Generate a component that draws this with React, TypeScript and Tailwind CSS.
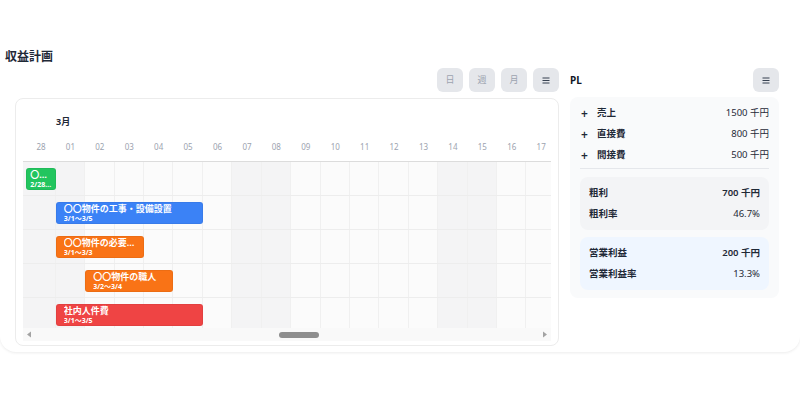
import React from "react";

const days = ["28", "01", "02", "03", "04", "05", "06", "07", "08", "09", "10", "11", "12", "13", "14", "15", "16", "17"];
const weekend = [0, 1, 7, 8, 14, 15];

interface Task {
    title: string;
    range: string;
    pos: string;
    color: string;
    pad: string;
}

const tasks: Task[] = [
    { title: "〇〇物件の工事", range: "2/28〜3/1", pos: "col-start-2 col-span-1", color: "bg-[#22c55e]", pad: "px-[3px]" },
    { title: "〇〇物件の工事・設備設置", range: "3/1〜3/5", pos: "col-start-3 col-span-5", color: "bg-[#3b82f6]", pad: "px-[7px]" },
    { title: "〇〇物件の必要経費", range: "3/1〜3/3", pos: "col-start-3 col-span-3", color: "bg-[#f97316]", pad: "px-[7px]" },
    { title: "〇〇物件の職人", range: "3/2〜3/4", pos: "col-start-4 col-span-3", color: "bg-[#f97316]", pad: "px-[7px]" },
    { title: "社内人件費", range: "3/1〜3/5", pos: "col-start-3 col-span-5", color: "bg-[#ef4444]", pad: "px-[7px]" },
];

const gridCols = "grid grid-cols-[3.3px_repeat(18,29.43px)]";

const MenuGlyph = () => (
    <svg width="8" height="7" viewBox="0 0 8 7" fill="none">
        <path d="M0.5 1h7M0.5 3.5h7M0.5 6h7" stroke="#374151" strokeWidth="1.1" />
    </svg>
);

const ToolButton = ({ children }: { children: React.ReactNode }) => (
    <button className="w-[26px] h-[24px] rounded-md bg-[#e5e7eb] text-[9px] text-[#9ca3af] flex items-center justify-center">
        {children}
    </button>
);

const PlRow = ({ label, value }: { label: string; value: string }) => (
    <div className="h-[21px] flex items-center justify-between">
        <div className="flex items-center">
            <span className="w-[17px] pl-[1px] text-[12px] font-semibold text-[#1f2937] leading-none">+</span>
            <span className="text-[9.5px] font-semibold text-[#1f2937]">{label}</span>
        </div>
        <span className="text-[9.5px] text-[#1f2937]">{value}</span>
    </div>
);

const BoxRow = ({ label, value, strong }: { label: string; value: string; strong?: boolean }) => (
    <div className="h-[21px] flex items-center justify-between">
        <span className="text-[9.5px] font-semibold text-[#1f2937]">{label}</span>
        <span className={strong ? "text-[9.5px] font-semibold text-[#1f2937]" : "text-[9.5px] text-[#1f2937]"}>
            {value}
        </span>
    </div>
);

const Gantt = () => (
    <div className="mt-[6px] h-[248px] border border-[#ececec] rounded-lg bg-white px-[7px] pt-[16px] pb-[4px] flex flex-col">
        <div className="h-[14px] pl-[33px] text-[9px] font-bold text-[#1f2937] leading-[14px]">3月</div>
        <div className="h-[33px] border-b border-[#dcdcdc] overflow-hidden">
            <div className={gridCols}>
                <div />
                {days.map((d) => (
                    <div key={d} className="pt-[12px] text-center text-[8px] leading-[12px] text-[#9ca3af]">
                        {d}
                    </div>
                ))}
            </div>
        </div>
        <div className="h-[166px] overflow-hidden">
            {tasks.map((t, i) => (
                <div key={i} className={`${gridCols} h-[34px] border-b border-[#ededed]`}>
                    <div className="row-start-1 col-start-1 bg-[#f4f4f5]" />
                    {days.map((d, j) => (
                        <div
                            key={d}
                            className={`row-start-1 border-r border-[#f0f0f0] ${weekend.includes(j) ? "bg-[#f4f4f5]" : "bg-[#fbfbfb]"}`}
                            style={{ gridColumnStart: j + 2 }}
                        />
                    ))}
                    <div className={`${t.pos} row-start-1 self-center h-[22px] rounded-[3px] ${t.color} ${t.pad} border border-black/5 flex flex-col justify-center min-w-0 text-white`}>
                        <div className="truncate text-[9px] font-bold leading-[11px]">{t.title}</div>
                        <div className="truncate text-[7px] font-bold leading-[9px]">{t.range}</div>
                    </div>
                </div>
            ))}
        </div>
        <div className="h-[13px] bg-[#f9f9f9] flex items-center">
            <svg width="6" height="7" viewBox="0 0 6 7" className="ml-[3px]">
                <path d="M5 0.5v6L1 3.5z" fill="#a3a3a3" />
            </svg>
            <div className="flex-1 flex items-center">
                <div className="ml-[247px] w-[40px] h-[6px] rounded-full bg-[#8e8e8e]" />
            </div>
            <svg width="6" height="7" viewBox="0 0 6 7" className="mr-[3px]">
                <path d="M1 0.5v6L5 3.5z" fill="#a3a3a3" />
            </svg>
        </div>
    </div>
);

const App = () => {
    return (
        <div className="w-[800px] h-[400px] bg-white" style={{ fontFamily: '"Noto Sans", "Noto Sans CJK JP", sans-serif' }}>
            <div className="h-[352px] bg-white rounded-b-2xl shadow-[0_1px_3px_rgba(0,0,0,0.08)] pt-[49px]">
                <h2 className="pl-[5px] h-[16px] text-[12px] leading-[16px] font-bold text-[#1f2937]">収益計画</h2>
                <div className="mt-[3px] pl-[15px] pr-[21px] flex gap-[11px]">
                    <div className="w-[544px]">
                        <div className="h-[24px] flex justify-end gap-[6px]">
                            <ToolButton>日</ToolButton>
                            <ToolButton>週</ToolButton>
                            <ToolButton>月</ToolButton>
                            <ToolButton>
                                <MenuGlyph />
                            </ToolButton>
                        </div>
                        <Gantt />
                    </div>
                    <div className="w-[209px]">
                        <div className="h-[24px] flex items-center justify-between">
                            <span className="text-[10px] font-bold text-[#111827]">PL</span>
                            <ToolButton>
                                <MenuGlyph />
                            </ToolButton>
                        </div>
                        <div className="mt-[5px] h-[201px] rounded-lg bg-[#f9fafb] px-[10px] pt-[6px]">
                            <PlRow label="売上" value="1500 千円" />
                            <PlRow label="直接費" value="800 千円" />
                            <PlRow label="間接費" value="500 千円" />
                            <div className="mt-[2px] border-t border-[#e5e7eb]" />
                            <div className="mt-[8px] h-[53px] rounded-lg bg-[#f3f4f6] px-[9px] pt-[6px]">
                                <BoxRow label="粗利" value="700 千円" strong />
                                <BoxRow label="粗利率" value="46.7%" />
                            </div>
                            <div className="mt-[7px] h-[53px] rounded-lg bg-[#eff6ff] px-[9px] pt-[6px]">
                                <BoxRow label="営業利益" value="200 千円" strong />
                                <BoxRow label="営業利益率" value="13.3%" />
                            </div>
                        </div>
                    </div>
                </div>
            </div>
        </div>
    );
};

export default App;
